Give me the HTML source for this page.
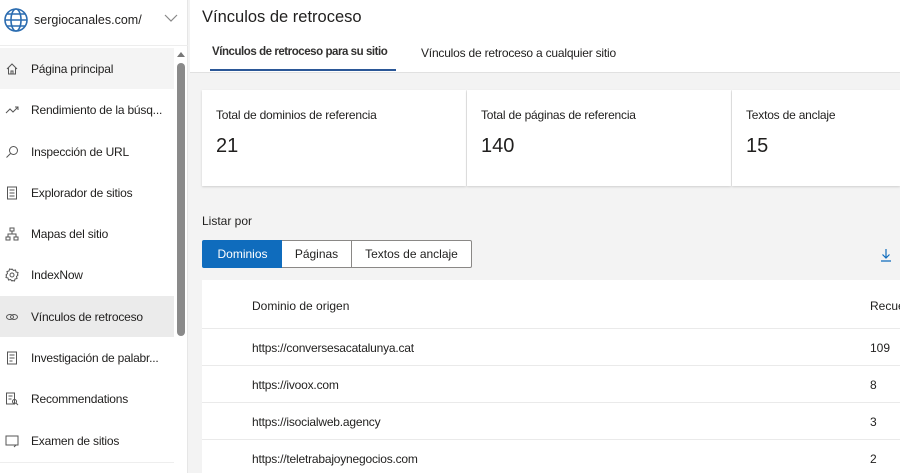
<!DOCTYPE html>
<html style="overflow:hidden"><head><meta charset="utf-8"><style>
*{box-sizing:border-box;margin:0;padding:0}
html,body{width:900px;height:473px;overflow:hidden}
body{font-family:"Liberation Sans",sans-serif;color:#201f1e;background:#f3f3f3;position:relative}
.sb{position:absolute;left:0;top:0;width:188px;height:473px;background:#fff;border-right:1px solid #e6e6e6}
.site{position:absolute;left:0;top:0;width:188px;height:46px;border-bottom:1px solid #ededed}
.site span{position:absolute;left:34px;top:13px;font-size:12.5px}
.item{position:absolute;left:0;width:174px;height:41px;font-size:12px}
.item span{position:absolute;left:31px;top:14px;letter-spacing:-0.2px}
.item svg{position:absolute;left:5px;top:14px}
.act1{background:#f4f4f4}.act2{background:#ebebeb}
.thumb{position:absolute;left:177px;top:63px;width:8px;height:273px;background:#8a8a8a;border-radius:4px}
.head{position:absolute;left:190px;top:0;width:710px;height:73px;background:#fff;border-bottom:1px solid #e1e1e1}
h1{position:absolute;left:12px;top:8px;font-size:16.5px;font-weight:normal}
.tab{position:absolute;top:46px;font-size:12px}
.card{position:absolute;top:90px;height:96px;background:#fff;box-shadow:0 1px 2px rgba(0,0,0,.15)}
.card .l{position:absolute;left:14px;top:18px;font-size:12px;letter-spacing:-0.2px}
.card .n{position:absolute;left:14px;top:45px;font-size:20px}
.seg{position:absolute;top:240px;height:28px;border:1px solid #8a8886;font-size:12px;text-align:center;line-height:26px;background:#fff}
.tbl{position:absolute;left:202px;top:280px;width:698px;height:193px;background:#fff;overflow:hidden}
.row{position:absolute;left:0;width:698px;height:37px;border-top:1px solid #eaeaea;font-size:12px}
.row .a{position:absolute;left:50px;top:12px;letter-spacing:-0.2px}
.row .b{position:absolute;left:668px;top:12px}
</style></head><body>
<div class="sb">
 <div class="site">
  <svg width="26" height="26" viewBox="0 0 26 26" style="position:absolute;left:3px;top:7px" fill="none" stroke="#2b6cb0" stroke-width="1.6"><circle cx="13" cy="13" r="11"/><ellipse cx="13" cy="13" rx="5" ry="11"/><path d="M2 13h22M4 7h18M4 19h18"/></svg>
  <span>sergiocanales.com/</span>
  <svg width="14" height="10" viewBox="0 0 14 10" style="position:absolute;left:164px;top:13px" fill="none" stroke="#888" stroke-width="1.2"><path d="M1 2l6 6 6-6"/></svg>
 </div>
 <div class="thumb"></div>
 <div style="position:absolute;left:177px;top:52px;width:0;height:0;border-left:4px solid transparent;border-right:4px solid transparent;border-bottom:5px solid #777"></div>
 <div class="item act1" style="top:48px"><svg width="14" height="14" viewBox="0 0 14 14" fill="none" stroke="#555"><path d="M2 7l5-5 5 5M3.5 6v6h7V6M6 12V9h2v3"/></svg><span>Página principal</span></div>
 <div class="item" style="top:89px"><svg width="16" height="14" viewBox="0 0 16 14" fill="none" stroke="#555"><path d="M1 10l4-4 3 3 5-5M10 4h3v3"/></svg><span>Rendimiento de la búsq...</span></div>
 <div class="item" style="top:131px"><svg width="14" height="14" viewBox="0 0 14 14" fill="none" stroke="#555"><circle cx="8.5" cy="5.5" r="4"/><path d="M5.5 8.5L1.5 12.5"/></svg><span>Inspección de URL</span></div>
 <div class="item" style="top:172px"><svg width="14" height="14" viewBox="0 0 14 14" fill="none" stroke="#555"><rect x="2.5" y="1" width="9" height="12"/><path d="M4.5 4h5M4.5 7h5M4.5 10h5"/></svg><span>Explorador de sitios</span></div>
 <div class="item" style="top:213px"><svg width="14" height="14" viewBox="0 0 14 14" fill="none" stroke="#555"><rect x="5" y="1" width="4" height="3"/><rect x="1" y="10" width="4" height="3"/><rect x="9" y="10" width="4" height="3"/><path d="M7 4v3M3 10V7h8v3"/></svg><span>Mapas del sitio</span></div>
 <div class="item" style="top:254px"><svg width="14" height="14" viewBox="0 0 14 14" fill="none" stroke="#555"><circle cx="7" cy="7" r="2"/><path d="M7 1l1.5 1.5 2-.5.5 2 2 .5-.5 2L13 7l-1.5 1.5.5 2-2 .5-.5 2-2-.5L7 13l-1.5-1.5-2 .5-.5-2-2-.5.5-2L1 7l1.5-1.5-.5-2 2-.5.5-2 2 .5z"/></svg><span>IndexNow</span></div>
 <div class="item act2" style="top:296px"><svg width="14" height="14" viewBox="0 0 14 14" fill="none" stroke="#555"><ellipse cx="5" cy="7" rx="3.5" ry="2.5"/><ellipse cx="9" cy="7" rx="3.5" ry="2.5"/></svg><span>Vínculos de retroceso</span></div>
 <div class="item" style="top:337px"><svg width="14" height="14" viewBox="0 0 14 14" fill="none" stroke="#555"><rect x="2.5" y="1" width="9" height="12"/><path d="M4.5 4h5M4.5 7h5M4.5 10h3"/></svg><span>Investigación de palabr...</span></div>
 <div class="item" style="top:378px"><svg width="14" height="14" viewBox="0 0 14 14" fill="none" stroke="#555"><rect x="1.5" y="1" width="8" height="11"/><path d="M3.5 4h4M3.5 7h3"/><circle cx="9.5" cy="9.5" r="2"/><path d="M11 11l2 2"/></svg><span>Recommendations</span></div>
 <div class="item" style="top:420px"><svg width="14" height="14" viewBox="0 0 14 14" fill="none" stroke="#555"><rect x="1" y="2" width="12" height="9"/><path d="M9 13l2-2"/></svg><span>Examen de sitios</span></div>
 <div style="position:absolute;left:0;top:462px;width:174px;height:1px;background:#eee"></div>
</div>
<div class="head">
 <h1>Vínculos de retroceso</h1>
 <div class="tab" style="left:22px;font-weight:bold;color:#323130;font-size:11.5px;letter-spacing:-0.45px">Vínculos de retroceso para su sitio</div>
 <div style="position:absolute;left:20px;top:69px;width:186px;height:2px;background:#2b5797"></div>
 <div class="tab" style="left:231px;letter-spacing:-0.2px">Vínculos de retroceso a cualquier sitio</div>
</div>
<div class="card" style="left:202px;width:264px"><div class="l">Total de dominios de referencia</div><div class="n">21</div></div>
<div class="card" style="left:467px;width:264px"><div class="l">Total de páginas de referencia</div><div class="n">140</div></div>
<div class="card" style="left:732px;width:168px"><div class="l">Textos de anclaje</div><div class="n">15</div></div>
<div style="position:absolute;left:202px;top:214px;font-size:12px">Listar por</div>
<div class="seg" style="left:202px;width:81px;background:#0f6cbd;border-color:#0f6cbd;color:#fff;border-radius:2px 0 0 2px">Dominios</div>
<div class="seg" style="left:282px;width:70px;border-left:none">Páginas</div>
<div class="seg" style="left:351px;width:121px;border-radius:0 2px 2px 0">Textos de anclaje</div>
<svg width="12" height="14" viewBox="0 0 12 14" style="position:absolute;left:880px;top:248px" fill="none" stroke="#0f6cbd" stroke-width="1.2"><path d="M6 1v9M2.5 6.5L6 10l3.5-3.5M1 13h10"/></svg>
<div class="tbl">
 <div style="position:absolute;left:50px;top:19px;font-size:12px">Dominio de origen</div>
 <div style="position:absolute;left:668px;top:19px;font-size:12px">Recue</div>
 <div class="row" style="top:48px"><span class="a">https://conversesacatalunya.cat</span><span class="b">109</span></div>
 <div class="row" style="top:85px"><span class="a">https://ivoox.com</span><span class="b">8</span></div>
 <div class="row" style="top:122px"><span class="a">https://isocialweb.agency</span><span class="b">3</span></div>
 <div class="row" style="top:159px"><span class="a">https://teletrabajoynegocios.com</span><span class="b">2</span></div>
</div>
</body></html>
